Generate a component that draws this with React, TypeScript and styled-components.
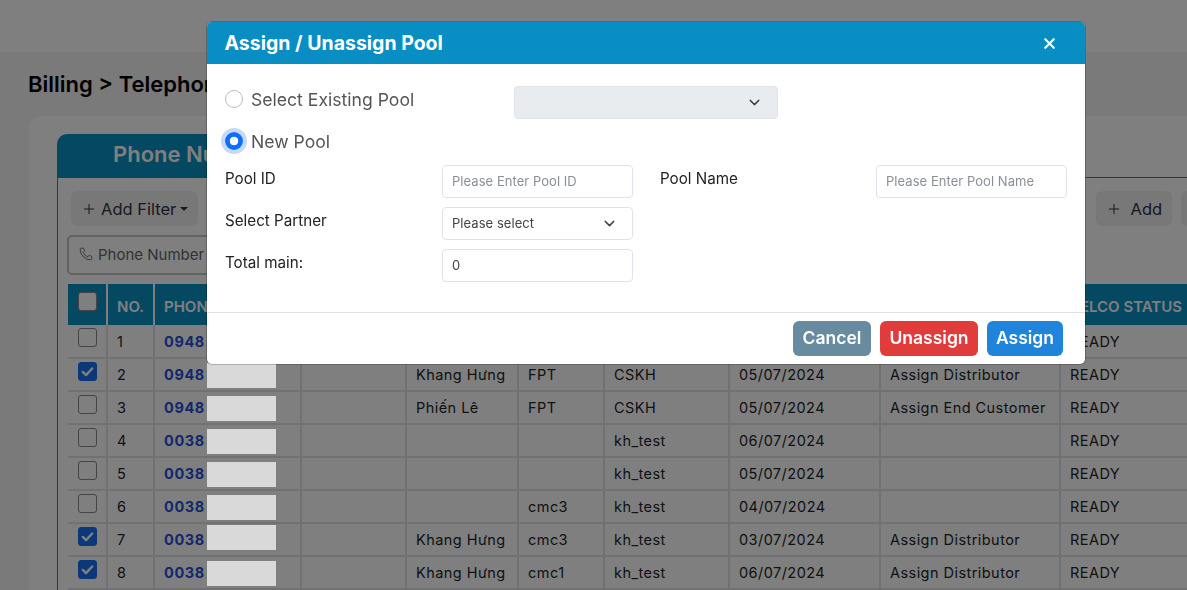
import React from "react";
import styled, { createGlobalStyle } from "styled-components";
import { ChevronDown, Phone, Plus, X } from "lucide-react";

const GlobalStyle = createGlobalStyle`
  html, body {
    margin: 0;
    height: 100%;
    overflow: hidden;
    background: #f4f4f4;
    font-family: Inter, "Noto Sans", "Liberation Sans", sans-serif;
    color: #212529;
  }
  * {
    box-sizing: border-box;
  }
`;

const Page = styled.div`
  width: 1187px;
  height: 590px;
  overflow: hidden;
`;

const TopBar = styled.div`
  height: 52px;
  background: #fff;
`;

const Main = styled.div`
  padding: 16px 0 0 28px;
  width: 1400px;
`;

const Title = styled.h1`
  margin: 0 0 16px;
  font-size: 22px;
  line-height: 32px;
  font-weight: 600;
  color: #000;
`;

const Card = styled.div`
  margin-left: 1px;
  padding: 18px 28px;
  background: #fff;
  border-radius: 12px 0 0 0;
`;

const TabBar = styled.div`
  display: flex;
`;

const Tab = styled.div`
  height: 43px;
  padding: 0 56px 3px;
  display: flex;
  align-items: center;
  background: #0890c2;
  border-radius: 10px 10px 0 0;
  color: #fff;
  font-size: 22px;
  font-weight: 600;
`;

const Panel = styled.div`
  border: 1px solid #0890c2;
  border-right: 0;
  padding: 13px 10px 0;
  display: flex;
  flex-direction: column;
  gap: 9px;
`;

const Toolbar = styled.div`
  display: flex;
  gap: 9px;
  padding-left: 3px;
  width: 1184px;
`;

const ToolButton = styled.div<{ $push?: boolean }>`
  height: 35px;
  padding: 0 10px;
  display: flex;
  align-items: center;
  gap: 4px;
  margin-left: ${(p) => (p.$push ? "auto" : "0")};
  background: #f0f1f3;
  border-radius: 6px;
  color: #33334a;
  font-size: 16.5px;
`;

const Caret = styled.span`
  border-left: 4px solid transparent;
  border-right: 4px solid transparent;
  border-top: 4px solid #33334a;
`;

const FilterBox = styled.div`
  width: 400px;
  height: 40px;
  margin-left: -1px;
  padding: 0 0 2px 10px;
  display: flex;
  align-items: center;
  gap: 5px;
  border: 2px solid #c4c4c4;
  border-radius: 5px;
  color: #666;
  font-size: 15px;
`;

const Table = styled.table`
  border-collapse: collapse;
  table-layout: fixed;
  width: 1241px;
`;

const HeadCell = styled.th`
  height: 41px;
  padding: 3px 9px 0;
  background: #0890c2;
  border-right: 2px solid #fff;
  color: #fff;
  font-size: 15px;
  font-weight: 600;
  text-align: left;
  white-space: nowrap;
  overflow: hidden;
`;

const CheckHead = styled(HeadCell)`
  padding: 8px 0 0 10px;
  vertical-align: top;
`;

const Row = styled.tr`
  height: 33px;
`;

const Cell = styled.td`
  position: relative;
  padding: 0 9px;
  border: solid #dee2e6;
  border-width: 0 2px 2px 0;
  font-size: 14.5px;
  letter-spacing: 0.45px;
  white-space: nowrap;
`;

const CheckCell = styled(Cell)`
  padding: 3px 0 0 10px;
  vertical-align: top;
`;

const PhoneLink = styled.span`
  color: #2450d8;
  font-weight: 700;
  letter-spacing: 0.6px;
`;

const Check = styled.span<{ $on?: boolean; $head?: boolean }>`
  width: 19px;
  height: 19px;
  display: flex;
  align-items: center;
  justify-content: center;
  border-radius: 3px;
  border: 1px solid ${(p) => (p.$on ? "#1670f0" : "#8a8a8a")};
  background: ${(p) => (p.$on ? "#1670f0" : p.$head ? "#fff" : "transparent")};
`;

const Redaction = styled.span<{ $top: number }>`
  position: absolute;
  left: 52px;
  top: ${(p) => p.$top}px;
  width: 69px;
  height: 25px;
  background: #d9d9d9;
  z-index: 11;
`;

const Backdrop = styled.div`
  position: fixed;
  inset: 0;
  background: rgba(0, 0, 0, 0.5);
  z-index: 10;
`;

const Modal = styled.div`
  position: fixed;
  left: 207px;
  top: 22px;
  width: 878px;
  height: 342px;
  display: flex;
  flex-direction: column;
  background: #fff;
  border-radius: 5px;
  box-shadow: 0 0 0 1px rgba(0, 0, 0, 0.2);
  overflow: hidden;
  z-index: 12;
`;

const ModalHeader = styled.div`
  height: 42px;
  flex: none;
  padding: 0 27px 0 17.5px;
  display: flex;
  align-items: center;
  justify-content: space-between;
  background: #088ec2;
  color: #fff;
  font-size: 19.5px;
  font-weight: 700;
`;

const ModalBody = styled.div`
  flex: 1;
  padding: 22px 18px 0;
`;

const RadioRow = styled.div`
  display: flex;
  align-items: flex-start;
  height: 33px;
  margin-bottom: 9px;
`;

const RadioLabel = styled.label`
  display: flex;
  align-items: center;
  gap: 8px;
  width: 289px;
  height: 26px;
  color: #555;
  font-size: 17.6px;
`;

const Radio = styled.input.attrs({ type: "radio", readOnly: true })`
  appearance: none;
  margin: 0;
  width: 18px;
  height: 18px;
  border-radius: 50%;
  border: 1px solid #bcbcbc;
  background: #fff;

  &:checked {
    border: 0;
    background: radial-gradient(circle, #fff 0 4px, #0d6efd 4.6px);
    box-shadow: 0 0 0 4px #c5d9fb;
  }
`;

const SelectBox = styled.div<{ $disabled?: boolean }>`
  height: 33px;
  padding: 0 14px 1px 9px;
  display: flex;
  align-items: center;
  justify-content: space-between;
  border: 1px solid #e2e2ee;
  border-radius: 4px;
  background: ${(p) => (p.$disabled ? "#e9ecef" : "#fff")};
  color: #444;
  font-size: 13px;
  letter-spacing: 0.05px;
`;

const ExistingSelect = styled(SelectBox)`
  width: 264px;
`;

const FormGrid = styled.div`
  display: grid;
  grid-template-columns: 217px 191px 243px 191px;
  row-gap: 9px;
  margin-top: -5px;
`;

const FieldLabel = styled.div<{ $indent?: boolean }>`
  grid-column: ${(p) => (p.$indent ? "3" : "1")};
  padding: 4px 0 0 ${(p) => (p.$indent ? "27px" : "0")};
  color: #222;
  font-size: 15.2px;
  line-height: 20px;
`;

const TextInput = styled.input`
  width: 100%;
  height: 33px;
  padding: 0 9px 1px;
  border: 1px solid #e2e2ee;
  border-radius: 4px;
  outline: none;
  color: #444;
  font-family: inherit;
  font-size: 13px;
  letter-spacing: 0.05px;

  &::placeholder {
    color: #8a8f98;
  }
`;

const ModalFooter = styled.div`
  flex: none;
  height: 52px;
  padding: 8px 22px 0 0;
  display: flex;
  justify-content: flex-end;
  gap: 9px;
  border-top: 1px solid #e0e0e8;
`;

const FooterButton = styled.button<{ $bg: string; $w: number }>`
  width: ${(p) => p.$w}px;
  height: 35px;
  border: 0;
  border-radius: 6px;
  background: ${(p) => p.$bg};
  color: #fff;
  font-family: inherit;
  font-size: 17.5px;
  font-weight: 600;
  padding: 0 0 2px;
`;

const CloseButton = styled.span`
  display: flex;
  color: #fff;
`;

type RowData = {
  phone: string;
  checked: boolean;
  top?: number;
  owner?: string;
  partner?: string;
  service: string;
  date: string;
  action?: string;
};

const rows: RowData[] = [
  { phone: "0948", checked: false, service: "", date: "" },
  { phone: "0948", checked: true, top: 4, owner: "Khang Hưng", partner: "FPT", service: "CSKH", date: "05/07/2024", action: "Assign Distributor" },
  { phone: "0948", checked: false, top: 4, owner: "Phiến Lê", partner: "FPT", service: "CSKH", date: "05/07/2024", action: "Assign End Customer" },
  { phone: "0038", checked: false, top: 4, service: "kh_test", date: "06/07/2024" },
  { phone: "0038", checked: false, top: 4, service: "kh_test", date: "05/07/2024" },
  { phone: "0038", checked: false, top: 4, partner: "cmc3", service: "kh_test", date: "04/07/2024" },
  { phone: "0038", checked: true, top: 1, owner: "Khang Hưng", partner: "cmc3", service: "kh_test", date: "03/07/2024", action: "Assign Distributor" },
  { phone: "0038", checked: true, top: 4, owner: "Khang Hưng", partner: "cmc1", service: "kh_test", date: "06/07/2024", action: "Assign Distributor" },
];

const widths = [39, 47, 147, 105, 112, 86, 125, 151, 180, 249];
const heads = ["NO.", "PHONE NUMBER", "POOL", "PARTNER", "CUSTOMER", "SERVICE", "DATE", "ACTION", "TELCO STATUS"];

const CheckMark = () => (
  <svg width="15" height="15" viewBox="0 0 16 16" fill="none" stroke="#fff" strokeWidth="2.6" strokeLinecap="round" strokeLinejoin="round">
    <path d="M3 8.5l3.4 3.4L13 4.8" />
  </svg>
);

const App: React.FC = () => {
  return (
    <Page>
      <GlobalStyle />
      <TopBar />
      <Main>
        <Title>Billing &gt; Telephone Number</Title>
        <Card>
          <TabBar>
            <Tab>Phone Number</Tab>
          </TabBar>
          <Panel>
            <Toolbar>
              <ToolButton>
                <Plus size={16} strokeWidth={1.5} />
                Add Filter
                <Caret />
              </ToolButton>
              <ToolButton $push>
                <Plus size={16} strokeWidth={1.5} />
                &nbsp;Add
              </ToolButton>
              <ToolButton>Export</ToolButton>
            </Toolbar>
            <FilterBox>
              <Phone size={14} strokeWidth={1.5} />
              Phone Number
            </FilterBox>
            <Table>
              <colgroup>
                {widths.map((w, i) => (
                  <col key={i} width={w} />
                ))}
              </colgroup>
              <thead>
                <tr>
                  <CheckHead>
                    <Check $head />
                  </CheckHead>
                  {heads.map((h) => (
                    <HeadCell key={h}>{h}</HeadCell>
                  ))}
                </tr>
              </thead>
              <tbody>
                {rows.map((row, index) => (
                  <Row key={index}>
                    <CheckCell>
                      <Check $on={row.checked}>{row.checked && <CheckMark />}</Check>
                    </CheckCell>
                    <Cell>{index + 1}</Cell>
                    <Cell>
                      <PhoneLink>{row.phone}</PhoneLink>
                      {row.top !== undefined && <Redaction $top={row.top} />}
                    </Cell>
                    <Cell />
                    <Cell>{row.owner}</Cell>
                    <Cell>{row.partner}</Cell>
                    <Cell>{row.service}</Cell>
                    <Cell>{row.date}</Cell>
                    <Cell>{row.action}</Cell>
                    <Cell>READY</Cell>
                  </Row>
                ))}
              </tbody>
            </Table>
          </Panel>
        </Card>
      </Main>
      <Backdrop />
      <Modal>
        <ModalHeader>
          Assign / Unassign Pool
          <CloseButton>
            <X size={17} strokeWidth={3} />
          </CloseButton>
        </ModalHeader>
        <ModalBody>
          <RadioRow>
            <RadioLabel>
              <Radio name="pool" />
              Select Existing Pool
            </RadioLabel>
            <ExistingSelect $disabled>
              <span />
              <ChevronDown size={17} strokeWidth={2} />
            </ExistingSelect>
          </RadioRow>
          <RadioRow>
            <RadioLabel>
              <Radio name="pool" defaultChecked />
              New Pool
            </RadioLabel>
          </RadioRow>
          <FormGrid>
            <FieldLabel>Pool ID</FieldLabel>
            <TextInput placeholder="Please Enter Pool ID" />
            <FieldLabel $indent>Pool Name</FieldLabel>
            <TextInput placeholder="Please Enter Pool Name" />
            <FieldLabel>Select Partner</FieldLabel>
            <SelectBox>
              Please select
              <ChevronDown size={17} strokeWidth={2} />
            </SelectBox>
            <FieldLabel>Total main:</FieldLabel>
            <TextInput defaultValue="0" />
          </FormGrid>
        </ModalBody>
        <ModalFooter>
          <FooterButton $bg="#688ba0" $w={78}>Cancel</FooterButton>
          <FooterButton $bg="#e03c3c" $w={98}>Unassign</FooterButton>
          <FooterButton $bg="#2084da" $w={76}>Assign</FooterButton>
        </ModalFooter>
      </Modal>
    </Page>
  );
};

export default App;
